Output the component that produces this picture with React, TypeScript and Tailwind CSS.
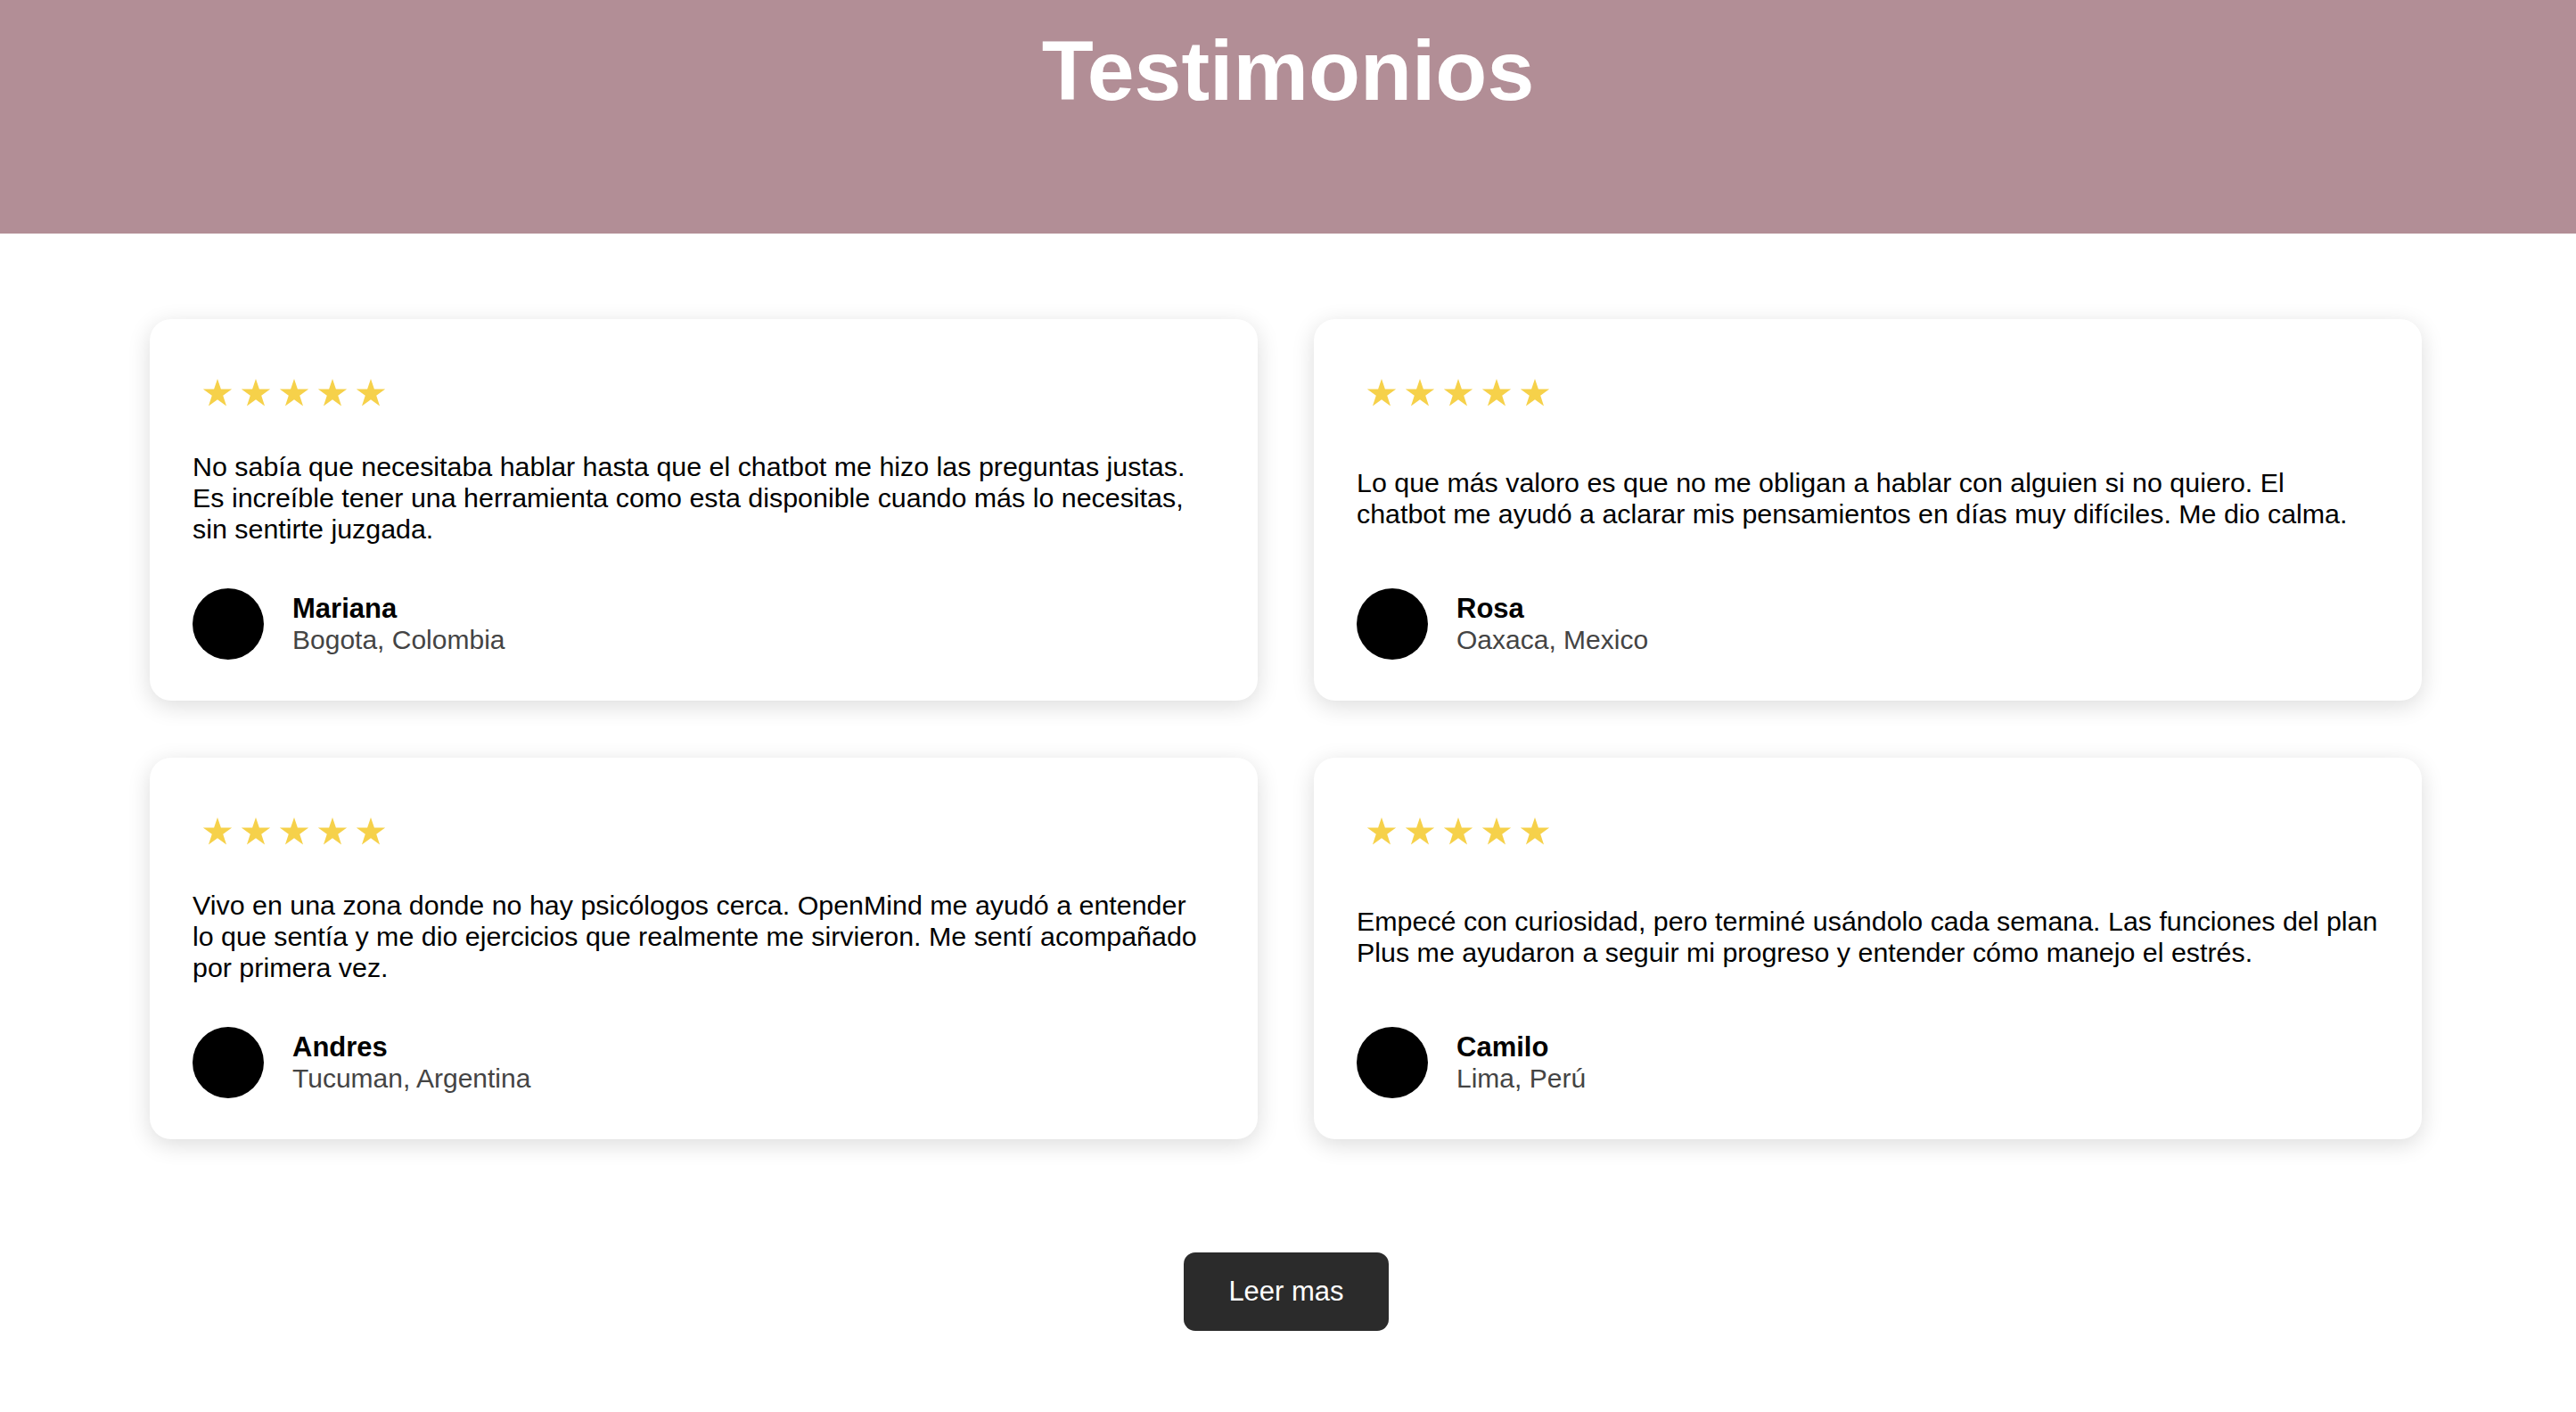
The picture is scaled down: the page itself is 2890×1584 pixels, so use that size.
import React from 'react';

type Testimonial = {
  lines: string[];
  name: string;
  place: string;
};

// lines are split by hand so the wrapping matches the design
const testimonials: Testimonial[] = [
  {
    lines: [
      'No sabía que necesitaba hablar hasta que el chatbot me hizo las preguntas justas.',
      'Es increíble tener una herramienta como esta disponible cuando más lo necesitas,',
      'sin sentirte juzgada.',
    ],
    name: 'Mariana',
    place: 'Bogota, Colombia',
  },
  {
    lines: [
      'Lo que más valoro es que no me obligan a hablar con alguien si no quiero. El',
      'chatbot me ayudó a aclarar mis pensamientos en días muy difíciles. Me dio calma.',
    ],
    name: 'Rosa',
    place: 'Oaxaca, Mexico',
  },
  {
    lines: [
      'Vivo en una zona donde no hay psicólogos cerca. OpenMind me ayudó a entender',
      'lo que sentía y me dio ejercicios que realmente me sirvieron. Me sentí acompañado',
      'por primera vez.',
    ],
    name: 'Andres',
    place: 'Tucuman, Argentina',
  },
  {
    lines: [
      'Empecé con curiosidad, pero terminé usándolo cada semana. Las funciones del plan',
      'Plus me ayudaron a seguir mi progreso y entender cómo manejo el estrés.',
    ],
    name: 'Camilo',
    place: 'Lima, Perú',
  },
];

const Star = () => (
  <svg width="34" height="33" viewBox="0 0 24 23" className="block">
    <path
      d="M12 0.5l2.75 8.2h8.65l-7 5.1 2.7 8.3L12 17l-7.1 5.1 2.7-8.3-7-5.1h8.65z"
      fill="#f6d14a"
    />
  </svg>
);

const Card: React.FC<{ t: Testimonial }> = ({ t }) => (
  <div className="flex flex-col justify-between gap-[49px] rounded-3xl bg-white px-12 pt-[66px] pb-[46px] shadow-[0_6px_26px_rgba(0,0,0,0.14)]">
    <div className="ml-[11px] flex gap-[9px]">
      {[0, 1, 2, 3, 4].map((i) => (
        <Star key={i} />
      ))}
    </div>
    <p className="text-[30.4px] leading-[35px] whitespace-nowrap text-black">
      {t.lines.map((line, i) => (
        <span key={i} className="block">
          {line}
        </span>
      ))}
    </p>
    <div className="flex items-center gap-8">
      <div className="h-20 w-20 shrink-0 rounded-full bg-black" />
      <div className="flex flex-col">
        <span className="text-[31px] leading-[35px] font-bold text-black">{t.name}</span>
        <span className="text-[30px] leading-[35px] text-[#444444]">{t.place}</span>
      </div>
    </div>
  </div>
);

export default function App() {
  return (
    <div className="min-h-screen bg-white pb-24" style={{ fontFamily: '"Liberation Sans", Arial, sans-serif' }}>
      <header className="flex h-[262px] justify-center bg-[#b28e96] pt-8">
        <h1 className="text-[95px] leading-none font-bold text-white">Testimonios</h1>
      </header>

      <section className="mt-24 ml-[168px] grid w-[2549px] grid-cols-2 gap-x-[63px] gap-y-16">
        {testimonials.map((t) => (
          <Card key={t.name} t={t} />
        ))}
      </section>

      <div className="mt-[127px] flex justify-center pr-[4px]">
        <button className="h-[88px] w-[230px] rounded-[13px] bg-[#2b2b2b] text-[31px] text-white">
          Leer mas
        </button>
      </div>
    </div>
  );
}
